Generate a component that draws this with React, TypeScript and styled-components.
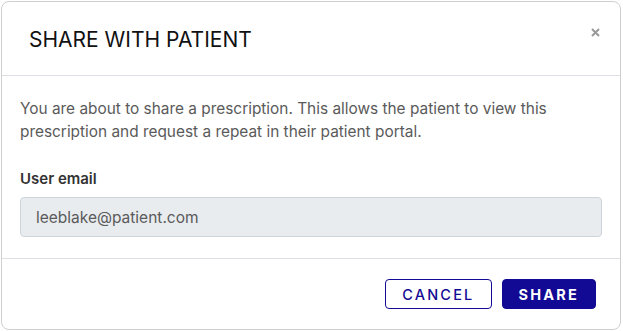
import React from "react";
import styled, { createGlobalStyle } from "styled-components";

const Global = createGlobalStyle`
  html, body { margin: 0; padding: 0; background: #ffffff; }
  body { font-family: Inter, "Noto Sans", sans-serif; }
  * { box-sizing: border-box; }
`;

const Page = styled.div`
  width: 623px;
  height: 331px;
  padding: 1px 2px 1px 1px;
`;

const Modal = styled.div`
  width: 620px;
  height: 329px;
  border: 1px solid #cfcfcf;
  border-radius: 8px;
  background: #fff;
  display: flex;
  flex-direction: column;
  overflow: hidden;
`;

const Header = styled.div`
  height: 74px;
  flex: none;
  display: flex;
  align-items: center;
  justify-content: space-between;
  padding: 0 19px 0 27px;
  border-bottom: 1px solid #dcdfe3;
`;

const Title = styled.h2`
  margin: 0;
  font-size: 21px;
  font-weight: 400;
  color: #111;
  margin-top: 1px;
`;

const Close = styled.button`
  border: none;
  background: none;
  padding: 0;
  width: 12px;
  height: 12px;
  display: flex;
  align-items: center;
  justify-content: center;
  align-self: flex-start;
  margin-top: 24px;
  cursor: pointer;
`;

const Body = styled.div`
  flex: none;
  padding: 21px 18px 21px 18px;
  border-bottom: 1px solid #dcdfe3;
`;

const Text = styled.p`
  margin: 0;
  font-size: 15.4px;
  line-height: 23px;
  color: #5a5a5a;
`;

const Label = styled.label`
  display: block;
  margin-top: 26px;
  font-size: 15px;
  font-weight: 600;
  color: #333;
  line-height: 20px;
`;

const Input = styled.input`
  display: block;
  width: 100%;
  height: 40px;
  margin-top: 8px;
  padding: 0 15px;
  border: 1px solid #ced4da;
  border-radius: 4px;
  background: #e9ecef;
  font-family: inherit;
  font-size: 15.5px;
  color: #5a5a5a;
`;

const Footer = styled.div`
  flex: 1;
  display: flex;
  align-items: center;
  justify-content: flex-end;
  gap: 10px;
  padding: 0 24px 0 0;
`;

const Button = styled.button<{ $primary?: boolean }>`
  height: 30px;
  padding: 0 16px;
  border-radius: 4px;
  border: 1px solid #120a94;
  background: ${(p) => (p.$primary ? "#120a94" : "#fff")};
  color: ${(p) => (p.$primary ? "#fff" : "#120a94")};
  font-family: inherit;
  font-size: 14.5px;
  font-weight: ${(p) => (p.$primary ? 700 : 500)};
  letter-spacing: 2.2px;
  cursor: pointer;
`;

export default function App() {
  return (
    <Page>
      <Global />
      <Modal>
        <Header>
          <Title>SHARE WITH PATIENT</Title>
          <Close aria-label="Close">
            <svg width="9" height="9" viewBox="0 0 9 9">
              <path d="M1 1L8 8M8 1L1 8" stroke="#999" strokeWidth="2" strokeLinecap="butt" />
            </svg>
          </Close>
        </Header>
        <Body>
          <Text>
            You are about to share a prescription. This allows the patient to view this prescription and request a
            repeat in their patient portal.
          </Text>
          <Label htmlFor="email">User email</Label>
          <Input id="email" value="leeblake@patient.com" disabled readOnly />
        </Body>
        <Footer>
          <Button>CANCEL</Button>
          <Button $primary>SHARE</Button>
        </Footer>
      </Modal>
    </Page>
  );
}
